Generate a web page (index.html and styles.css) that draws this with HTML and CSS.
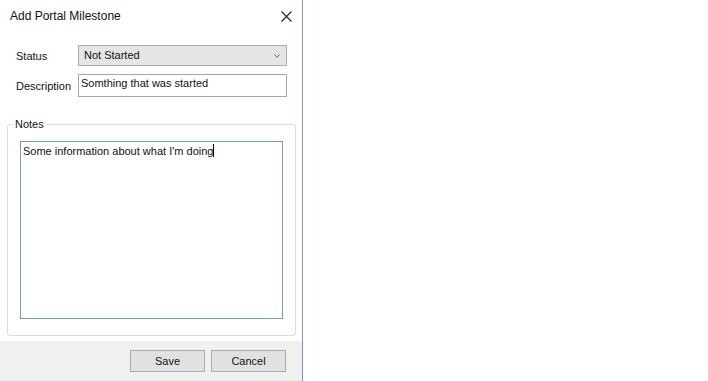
FILE: index.html
```html
<!DOCTYPE html>
<html>
<head>
<meta charset="utf-8">
<link rel="stylesheet" href="styles.css">
</head>
<body>
<div class="dialog">
  <div class="titlebar">
    <span class="title">Add Portal Milestone</span>
    <svg class="close" width="11" height="11" viewBox="0 0 11 11"><path d="M0.5 0.5 L10.5 10.5 M10.5 0.5 L0.5 10.5" stroke="#222" stroke-width="1.1" fill="none"/></svg>
  </div>
  <div class="fields">
    <div class="row">
      <span class="label">Status</span>
      <div class="select"><span>Not Started</span><svg width="6" height="4" viewBox="0 0 6 4"><path d="M0.5 0.5 L3 3.3 L5.5 0.5" stroke="#666" stroke-width="1" fill="none"/></svg></div>
    </div>
    <div class="row row2">
      <span class="label">Description</span>
      <div class="textbox">Somthing that was started</div>
    </div>
  </div>
  <fieldset class="group">
    <legend>Notes</legend>
    <div class="notes">Some information about what I'm doing<span class="caret"></span></div>
  </fieldset>
  <div class="footer">
    <button class="btn">Save</button>
    <button class="btn">Cancel</button>
  </div>
</div>
</body>
</html>
```
FILE: styles.css
```css
html, body {
  margin: 0;
  padding: 0;
  background: #ffffff;
}
body {
  font-family: "Liberation Sans", Arial, sans-serif;
  font-size: 11px;
  color: #111;
}
.dialog {
  width: 302px;
  height: 381px;
  border-right: 1px solid #8099b3;
  display: flex;
  flex-direction: column;
  background: #fff;
}
.titlebar {
  height: 32px;
  display: flex;
  align-items: center;
  justify-content: space-between;
  padding: 0 10px 0 10px;
}
.title {
  font-size: 12px;
  color: #111;
}
.fields {
  padding: 13px 15px 0 16px;
}
.row {
  display: flex;
  align-items: center;
}
.row2 {
  margin-top: 8px;
}
.label {
  width: 62px;
  flex: none;
}
.select {
  flex: 1;
  height: 21px;
  box-sizing: border-box;
  border: 1px solid #acacac;
  background: #e5e5e5;
  display: flex;
  align-items: center;
  justify-content: space-between;
  padding: 0 6px 0 5px;
  line-height: 14px;
}
.select span {
  margin-top: -2px;
}
.textbox {
  flex: 1;
  height: 23px;
  box-sizing: border-box;
  border: 1px solid #a6a6a6;
  background: #fff;
  padding: 1px 2px;
  line-height: 14px;
}
.group {
  margin: 20px 6px 0 7px;
  padding: 10px 12px 16px 12px;
  border: 1px solid #dcdcdc;
  border-radius: 3px;
}
.group legend {
  padding: 0 2px;
  margin-left: -7px;
  line-height: 14px;
}
.notes {
  height: 178px;
  box-sizing: border-box;
  border: 1px solid #7a9cbb;
  padding: 2px 2px;
  line-height: 14px;
  background: #fff;
}
.caret {
  display: inline-block;
  width: 1px;
  height: 13px;
  background: #000;
  vertical-align: -2px;
}
.footer {
  margin-top: auto;
  height: 40px;
  background: #f0f0f0;
  display: flex;
  align-items: center;
  justify-content: flex-end;
  gap: 6px;
  padding-right: 16px;
}
.btn {
  width: 75px;
  height: 22px;
  border: 1px solid #adadad;
  background: #e1e1e1;
  font-family: "Liberation Sans", Arial, sans-serif;
  font-size: 11px;
  color: #111;
  padding: 0;
}
```
